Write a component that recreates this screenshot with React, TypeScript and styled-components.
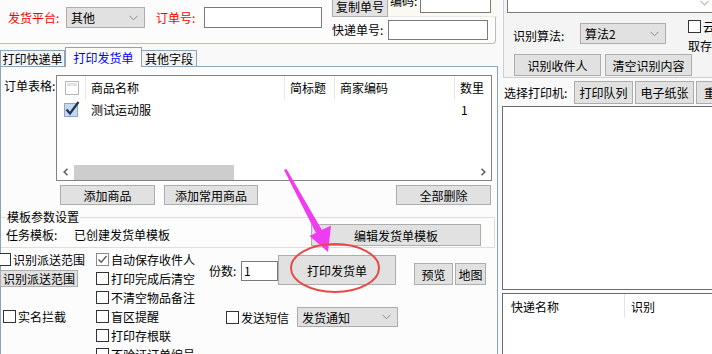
import React from 'react';
import styled, { createGlobalStyle } from 'styled-components';

const GlobalStyle = createGlobalStyle`
  * { box-sizing: border-box; }
  body {
    margin: 0;
    background: #f7f7f7;
    font-family: "Noto Sans CJK SC", "Liberation Sans", sans-serif;
    font-size: 12px;
    color: #000;
  }
`;

const Screen = styled.div`
  position: relative;
  width: 712px;
  height: 354px;
  overflow: hidden;
  display: flex;
  background: #f9f9f9;
`;

const LeftCol = styled.div`
  width: 498px;
  flex-shrink: 0;
  display: flex;
  flex-direction: column;
`;

const TopPanel = styled.div`
  width: 496px;
  height: 44px;
  flex-shrink: 0;
  display: flex;
  align-items: flex-start;
  background: #fcfcfc;
  border-bottom: 1px solid #c4bcb3;
  border-right: 1px solid #c4bcb3;
  border-bottom-right-radius: 4px;
`;

const TopLeft = styled.div`
  display: flex;
  align-items: center;
  padding: 7px 0 0 8px;
`;

const RedLabel = styled.span<{ $w: number; $ml?: number }>`
  display: inline-block;
  width: ${(p) => p.$w}px;
  margin-left: ${(p) => p.$ml ?? 0}px;
  color: #ff0000;
  line-height: 21px;
  white-space: nowrap;
`;

const Label = styled.span<{ $w?: number }>`
  display: inline-block;
  ${(p) => (p.$w ? `width: ${p.$w}px;` : '')}
  flex-shrink: 0;
  line-height: 14px;
  white-space: nowrap;
`;

const SelectBox = styled.div<{ $w: number; $h?: number }>`
  width: ${(p) => p.$w}px;
  height: ${(p) => p.$h ?? 21}px;
  flex-shrink: 0;
  display: flex;
  align-items: center;
  justify-content: space-between;
  padding: 0 6px 0 4px;
  background: #e1e1e1;
  border: 1px solid #adadad;
  white-space: nowrap;
`;

const TextBox = styled.div<{ $w: number; $h?: number }>`
  width: ${(p) => p.$w}px;
  height: ${(p) => p.$h ?? 21}px;
  flex-shrink: 0;
  background: #fff;
  border: 1px solid #7a7a7a;
  padding-left: 2px;
  line-height: 18px;
`;

const Button = styled.div<{ $w: number; $h?: number }>`
  width: ${(p) => p.$w}px;
  height: ${(p) => p.$h ?? 20}px;
  flex-shrink: 0;
  display: flex;
  align-items: center;
  justify-content: center;
  background: #e1e1e1;
  border: 1px solid #adadad;
  white-space: nowrap;
`;

const TopRight = styled.div`
  margin-left: 10px;
  display: flex;
  flex-direction: column;
`;

const CodeRow = styled.div`
  display: flex;
  margin-top: -4px;
  height: 21px;
`;

const CodeArea = styled.div`
  display: flex;
  align-items: flex-start;
  width: 110px;
  height: 21px;
  padding-left: 2px;
  background: #fbfaf2;
  border-bottom: 1px solid #ecebe1;
`;

const CodeLabel = styled.span`
  width: 30px;
  margin-top: -2px;
  line-height: 14px;
`;

const ExpressRow = styled.div`
  display: flex;
  align-items: center;
  margin-top: 3px;
`;

const TabStrip = styled.div`
  position: relative;
  z-index: 1;
  display: flex;
  align-items: flex-end;
  height: 20px;
  margin-top: 3px;
  margin-bottom: -1px;
`;

const Tab = styled.div<{ $active?: boolean; $w: number }>`
  width: ${(p) => p.$w}px;
  height: ${(p) => (p.$active ? 20 : 16)}px;
  margin-bottom: ${(p) => (p.$active ? 0 : 1)}px;
  margin-left: ${(p) => (p.$active ? 0 : -1)}px;
  border: 1px solid #8ea4b4;
  border-bottom: none;
  background: ${(p) => (p.$active ? '#fcfcfc' : '#f4f4f4')};
  color: ${(p) => (p.$active ? '#0000ff' : '#000')};
  line-height: ${(p) => (p.$active ? 19 : 15)}px;
  text-align: center;
  white-space: nowrap;
  &:first-child { margin-left: 0; }
`;

const TabPanel = styled.div`
  flex: 1;
  display: flex;
  flex-direction: column;
  background: #fcfcfc;
  border: 1px solid #8ea4b4;
  border-bottom: none;
`;

const OrderRow = styled.div`
  display: flex;
  margin-top: 8px;
`;

const OrderLabel = styled.span`
  width: 55px;
  padding-left: 3px;
  margin-top: 4px;
  line-height: 14px;
  white-space: nowrap;
`;

const ListView = styled.div`
  width: 436px;
  height: 106px;
  display: flex;
  flex-direction: column;
  background: #fff;
  border: 1px solid #828282;
`;

const ListRow = styled.div<{ $h: number }>`
  display: flex;
  height: ${(p) => p.$h}px;
  flex-shrink: 0;
`;

const Cell = styled.div<{ $w?: number; $sep?: boolean; $pl?: number }>`
  ${(p) => (p.$w ? `width: ${p.$w}px; flex-shrink: 0;` : 'flex: 1;')}
  display: flex;
  align-items: center;
  padding-left: ${(p) => p.$pl ?? 5}px;
  border-left: 1px solid ${(p) => (p.$sep ? '#e5e5e5' : 'transparent')};
  white-space: nowrap;
`;

const ListSpacer = styled.div`
  flex: 1;
`;

const HScroll = styled.div`
  display: flex;
  align-items: center;
  height: 16px;
  flex-shrink: 0;
`;

const ScrollArrow = styled.div`
  width: 17px;
  height: 16px;
  display: flex;
  align-items: center;
  justify-content: center;
`;

const ScrollThumb = styled.div`
  width: 160px;
  height: 15px;
  background: #cdcdcd;
`;

const ListButtons = styled.div`
  display: flex;
  gap: 9px;
  margin-top: 4px;
  padding-left: 59px;
  padding-right: 6px;
  & > :last-child { margin-left: auto; }
`;

const Group = styled.div`
  display: flex;
  flex-direction: column;
  margin-top: 12px;
  margin-right: 2px;
  padding-bottom: 1px;
  background: #fdfdfd;
  border: 1px solid #e0ded6;
  border-left: none;
`;

const GroupTitle = styled.span`
  align-self: flex-start;
  margin: -8px 0 0 5px;
  padding: 0 1px;
  line-height: 13px;
  background: #fcfcfc;
`;

const TemplateRow = styled.div`
  display: flex;
  align-items: center;
  margin-top: 1px;
  padding-left: 5px;
  padding-right: 13px;
  & > :last-child { margin-left: auto; }
`;

const BottomArea = styled.div`
  display: flex;
  margin-top: 2px;
`;

const Column = styled.div<{ $w?: number }>`
  ${(p) => (p.$w ? `width: ${p.$w}px; flex-shrink: 0;` : 'flex: 1;')}
  display: flex;
  flex-direction: column;
  align-items: flex-start;
`;

const CheckItem = styled.div<{ $ml?: number; $mt?: number; $h?: number }>`
  display: flex;
  align-items: center;
  gap: 2px;
  height: ${(p) => p.$h ?? 19}px;
  margin-left: ${(p) => p.$ml ?? 0}px;
  margin-top: ${(p) => p.$mt ?? 0}px;
  white-space: nowrap;
  flex-shrink: 0;
`;

const Box = styled.span<{ $checked?: boolean }>`
  width: 13px;
  height: 13px;
  flex-shrink: 0;
  display: flex;
  align-items: center;
  justify-content: center;
  background: #fff;
  border: 1px solid ${(p) => (p.$checked ? '#8a8a8a' : '#333')};
`;

const Offset = styled.div<{ $ml?: number; $mt?: number }>`
  margin-left: ${(p) => p.$ml ?? 0}px;
  margin-top: ${(p) => p.$mt ?? 0}px;
  flex-shrink: 0;
`;

const PrintRow = styled.div`
  display: flex;
  align-items: flex-start;
  margin-top: 5px;
  height: 30px;
`;

const SmsRow = styled.div`
  display: flex;
  align-items: center;
  margin-top: 22px;
  height: 20px;
`;

const RightCol = styled.div`
  flex: 1;
  min-width: 0;
  display: flex;
  flex-direction: column;
`;

const RecogGroup = styled.div`
  height: 78px;
  margin-left: 5px;
  display: flex;
  flex-direction: column;
  background: #f4f4f4;
  border-left: 1px solid #cfcfcf;
  border-bottom: 1px solid #cfcfcf;
`;

const MemoBox = styled.div`
  height: 13px;
  margin-left: 3px;
  display: flex;
  justify-content: flex-end;
  padding-right: 3px;
  background: #fff;
  border: 1px solid #7a7a7a;
  border-top: none;
  border-right: none;
`;

const AlgoRow = styled.div`
  display: flex;
  align-items: flex-start;
  margin-top: 10px;
  padding-left: 9px;
`;

const ExtraCol = styled.div`
  display: flex;
  flex-direction: column;
  margin: -3px 0 0 22px;
  flex-shrink: 0;
  white-space: nowrap;
`;

const RecogButtons = styled.div`
  display: flex;
  gap: 4px;
  padding-left: 10px;
`;

const PrinterRow = styled.div`
  display: flex;
  align-items: center;
  gap: 2px;
  height: 23px;
  margin-top: 3px;
  padding-left: 6px;
`;

const WhiteBox = styled.div<{ $h?: number; $mt: number }>`
  ${(p) => (p.$h ? `height: ${p.$h}px; flex-shrink: 0;` : 'flex: 1;')}
  margin: ${(p) => p.$mt}px 0 0 4px;
  background: #fff;
  border: 1px solid #6b6b6b;
  border-right: none;
  ${(p) => (p.$h ? '' : 'border-bottom: none;')}
`;

const Overlay = styled.svg`
  position: absolute;
  left: 0;
  top: 0;
  pointer-events: none;
`;

const Chevron = () => (
  <svg width="9" height="6" viewBox="0 0 9 6">
    <path d="M0.5 0.8 L4.5 4.8 L8.5 0.8" fill="none" stroke="#8a8a8a" strokeWidth="1" />
  </svg>
);

const Check = ({ checked, label, ml, mt, h }: { checked?: boolean; label?: string; ml?: number; mt?: number; h?: number }) => (
  <CheckItem $ml={ml} $mt={mt} $h={h}>
    <Box $checked={checked}>
      {checked && (
        <svg width="11" height="11" viewBox="0 0 11 11">
          <path d="M1.5 5.5 L4.2 8.3 L9.5 2" fill="none" stroke="#555" strokeWidth="1.3" />
        </svg>
      )}
    </Box>
    {label && <span>{label}</span>}
  </CheckItem>
);

const HeaderCheck = () => (
  <svg width="14" height="14" viewBox="0 0 14 14">
    <rect x="0.5" y="0.5" width="13" height="13" fill="#fff" stroke="#b8b8b8" />
    <rect x="2" y="2" width="10" height="3" fill="#dfe3e8" />
  </svg>
);

const RowCheck = () => (
  <svg width="16" height="16" viewBox="0 0 16 16">
    <rect x="0.5" y="2.5" width="13" height="13" fill="#c4d9ee" stroke="#8aa6c4" />
    <path d="M2.5 8.5 L6 12.5 L14.5 1" fill="none" stroke="#1f3550" strokeWidth="2.2" />
  </svg>
);

const ArrowGlyph = ({ dir }: { dir: 'l' | 'r' }) => (
  <svg width="6" height="8" viewBox="0 0 6 8">
    <path
      d={dir === 'l' ? 'M4.5 0.8 L1.2 4 L4.5 7.2' : 'M1.5 0.8 L4.8 4 L1.5 7.2'}
      fill="none"
      stroke="#606060"
      strokeWidth="1.6"
    />
  </svg>
);

const leftChecks = ['打印完成后清空', '不清空物品备注', '盲区提醒', '打印存根联', '不验证订单编号'];

const App = () => {
  return (
    <Screen>
      <GlobalStyle />
      <LeftCol>
        <TopPanel>
          <TopLeft>
            <RedLabel $w={58}>发货平台:</RedLabel>
            <SelectBox $w={79}>
              <span>其他</span>
              <Chevron />
            </SelectBox>
            <RedLabel $w={48} $ml={11}>订单号:</RedLabel>
            <TextBox $w={118} />
          </TopLeft>
          <TopRight>
            <CodeRow>
              <Button $w={56} $h={21}>复制单号</Button>
              <CodeArea>
                <CodeLabel>编码:</CodeLabel>
                <Offset $mt={-4}>
                  <TextBox $w={71} />
                </Offset>
              </CodeArea>
            </CodeRow>
            <ExpressRow>
              <Label $w={56}>快递单号:</Label>
              <TextBox $w={100} $h={20} />
            </ExpressRow>
          </TopRight>
        </TopPanel>

        <TabStrip>
          <Tab $w={65}>打印快递单</Tab>
          <Tab $w={77} $active>打印发货单</Tab>
          <Tab $w={56}>其他字段</Tab>
        </TabStrip>

        <TabPanel>
          <OrderRow>
            <OrderLabel>订单表格:</OrderLabel>
            <ListView>
              <ListRow $h={23}>
                <Cell $w={28} $pl={7}>
                  <HeaderCheck />
                </Cell>
                <Cell $w={199} $sep>商品名称</Cell>
                <Cell $w={50} $sep>简标题</Cell>
                <Cell $w={120} $sep>商家编码</Cell>
                <Cell $sep>数里</Cell>
              </ListRow>
              <ListRow $h={20}>
                <Cell $w={28} $pl={6}>
                  <RowCheck />
                </Cell>
                <Cell $w={199}>测试运动服</Cell>
                <Cell $w={50} />
                <Cell $w={120} />
                <Cell $pl={6}>1</Cell>
              </ListRow>
              <ListSpacer />
              <HScroll>
                <ScrollArrow>
                  <ArrowGlyph dir="l" />
                </ScrollArrow>
                <ScrollThumb />
                <ListSpacer />
                <ScrollArrow>
                  <ArrowGlyph dir="r" />
                </ScrollArrow>
              </HScroll>
            </ListView>
          </OrderRow>

          <ListButtons>
            <Button $w={95}>添加商品</Button>
            <Button $w={94}>添加常用商品</Button>
            <Button $w={95}>全部删除</Button>
          </ListButtons>

          <Group>
            <GroupTitle>模板参数设置</GroupTitle>
            <TemplateRow>
              <Label $w={68}>任务模板:</Label>
              <Label>已创建发货单模板</Label>
              <Button $w={170} $h={22}>编辑发货单模板</Button>
            </TemplateRow>
          </Group>

          <BottomArea>
            <Column $w={95}>
              <Check label="识别派送范围" ml={-3} />
              <Offset $mt={1} $ml={-1}>
                <Button $w={78} $h={17}>识别派送范围</Button>
              </Offset>
              <Check label="实名拦截" ml={2} mt={20} />
            </Column>
            <Column $w={113}>
              <Check label="自动保存收件人" checked />
              {leftChecks.map((t) => (
                <Check key={t} label={t} />
              ))}
            </Column>
            <Column>
              <PrintRow>
                <Offset $mt={7}>
                  <Label $w={32}>份数:</Label>
                </Offset>
                <Offset $mt={6}>
                  <TextBox $w={37} $h={20}>1</TextBox>
                </Offset>
                <Button $w={118} $h={30}>打印发货单</Button>
                <Offset $mt={8} $ml={18}>
                  <Button $w={39} $h={22}>预览</Button>
                </Offset>
                <Offset $mt={8} $ml={2}>
                  <Button $w={31} $h={22}>地图</Button>
                </Offset>
              </PrintRow>
              <SmsRow>
                <Check label="发送短信" ml={17} h={20} />
                <Offset $ml={8}>
                  <SelectBox $w={101} $h={20}>
                    <span>发货通知</span>
                    <Chevron />
                  </SelectBox>
                </Offset>
              </SmsRow>
            </Column>
          </BottomArea>
        </TabPanel>
      </LeftCol>

      <RightCol>
        <RecogGroup>
          <MemoBox>
            <svg width="9" height="6" viewBox="0 0 9 6">
              <path d="M0.5 0.8 L4.5 4.8 L8.5 0.8" fill="none" stroke="#c9b9a6" strokeWidth="1.2" />
            </svg>
          </MemoBox>
          <AlgoRow>
            <Offset $mt={4}>
              <Label $w={67}>识别算法:</Label>
            </Offset>
            <SelectBox $w={86}>
              <span>算法2</span>
              <Chevron />
            </SelectBox>
            <ExtraCol>
              <Check label="云端" h={13} />
              <Offset $mt={4}>
                <Label>取存档</Label>
              </Offset>
            </ExtraCol>
          </AlgoRow>
          <RecogButtons>
            <Button $w={87} $h={22}>识别收件人</Button>
            <Button $w={87} $h={22}>清空识别内容</Button>
          </RecogButtons>
        </RecogGroup>

        <PrinterRow>
          <Label $w={68}>选择打印机:</Label>
          <Button $w={59} $h={23}>打印队列</Button>
          <Button $w={59} $h={23}>电子纸张</Button>
          <Button $w={40} $h={23}>重置</Button>
        </PrinterRow>

        <WhiteBox $h={184} $mt={2} />
        <WhiteBox $mt={3}>
          <ListRow $h={24}>
            <Cell $w={121} $pl={7}>快递名称</Cell>
            <Cell $sep $pl={6}>识别</Cell>
          </ListRow>
        </WhiteBox>
      </RightCol>

      <Overlay width="712" height="354" viewBox="0 0 712 354">
        <polygon points="284,170 286.5,169 322.5,231 316.5,234" fill="#f03cf0" />
        <polygon points="309.5,236 331,225.5 328,252" fill="#f03cf0" />
        <ellipse cx="335" cy="268" rx="44" ry="24" fill="none" stroke="#e94848" strokeWidth="2" />
      </Overlay>
    </Screen>
  );
};

export default App;
